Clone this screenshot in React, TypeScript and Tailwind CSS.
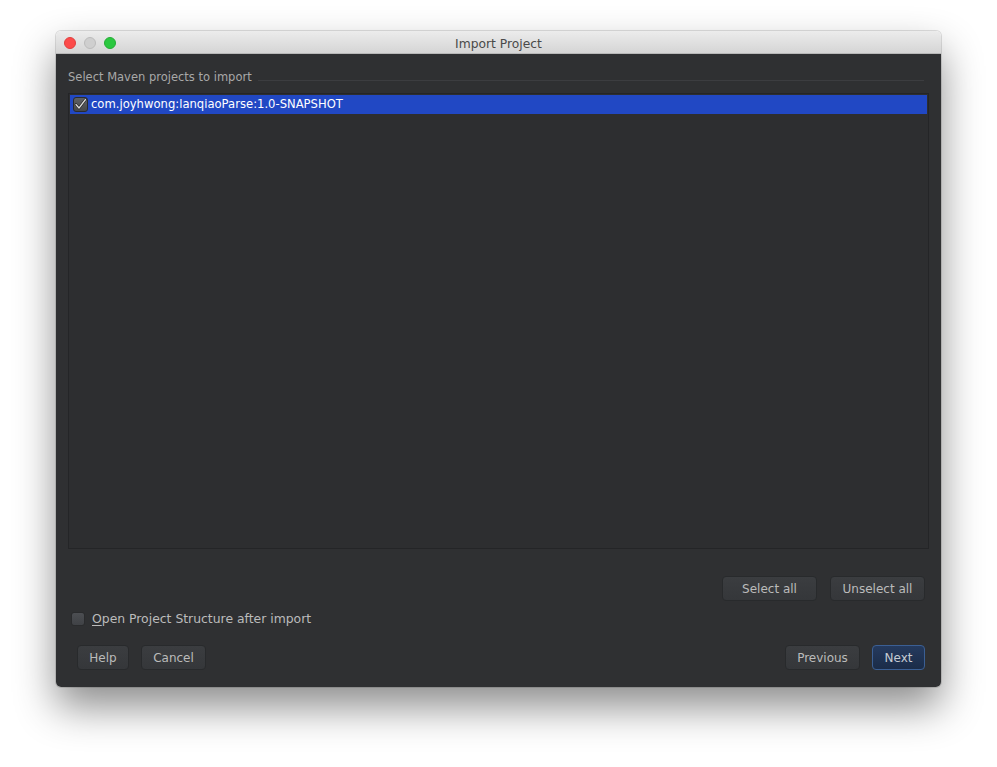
import React from "react";

const font = { fontFamily: '"DejaVu Sans", "Liberation Sans", sans-serif' };

function Btn({ children, w, primary }: { children: React.ReactNode; w: string; primary?: boolean }) {
  return (
    <div
      className={
        "h-[25px] flex items-center justify-center rounded-[4px] text-[12px] " +
        w +
        (primary
          ? " border border-[#3b5f94] bg-gradient-to-b from-[#253a5e] to-[#1b2c48] text-[#c5cbd3]"
          : " border border-[#282a2c] bg-gradient-to-b from-[#3b3d40] to-[#35373a] text-[#bbbbbb]")
      }
    >
      {children}
    </div>
  );
}

export default function App() {
  return (
    <div className="w-[997px] h-[767px] bg-white pt-[31px] pl-[56px]" style={font}>
      <div className="w-[885px] h-[656px] rounded-[5px] overflow-hidden flex flex-col shadow-[0_20px_40px_rgba(0,0,0,0.45),0_0_0_1px_rgba(0,0,0,0.12)]">
        {/* title bar */}
        <div className="h-[23px] relative flex items-center justify-center bg-gradient-to-b from-[#ececec] to-[#d5d5d5] border-b border-[#b8b8b8]">
          <div className="absolute left-[8px] top-[6px] flex gap-[8px]">
            <div className="w-[12px] h-[12px] rounded-full bg-[#fc4b4a] border border-[#e0403e]" />
            <div className="w-[12px] h-[12px] rounded-full bg-[#cfcfcf] border border-[#bcbcbc]" />
            <div className="w-[12px] h-[12px] rounded-full bg-[#2bc840] border border-[#24ad35]" />
          </div>
          <span className="text-[12.3px] text-[#4a4a4a] mt-[4px]">Import Project</span>
        </div>
        {/* content */}
        <div className="flex-1 bg-[#2f3032] flex flex-col px-[12px]">
          <div className="h-[39px] flex items-start pt-[16px]">
            <span className="text-[11.5px] leading-[14px] text-[#a8a8a8] whitespace-nowrap">Select Maven projects to import</span>
            <div className="flex-1 h-px bg-[#3c3d40] ml-[6px] mr-[5px] mt-[10px]" />
          </div>
          <div className="h-[456px] border border-[#242527] bg-[#2d2e30] p-[1px]">
            <div className="h-[19px] bg-[#2148c4] flex items-center pl-[3px]">
              <div className="w-[15px] h-[15px] rounded-[3px] bg-gradient-to-b from-[#5e6064] to-[#46484c] border border-[#2a2b2d] flex items-center justify-center">
                <svg width="13" height="13" viewBox="0 0 13 13">
                  <path d="M2 6.5 L5 10 L11.5 1.5" fill="none" stroke="#1e1e1e" strokeWidth="2.6" strokeLinecap="round" strokeLinejoin="round" />
                  <path d="M2 6.5 L5 10 L11.5 1.5" fill="none" stroke="#d8d8d8" strokeWidth="1.3" strokeLinecap="round" strokeLinejoin="round" />
                </svg>
              </div>
              <span className="ml-[3px] text-[11.6px] text-white whitespace-nowrap">com.joyhwong:lanqiaoParse:1.0-SNAPSHOT</span>
            </div>
          </div>
          <div className="flex justify-end gap-[13px] mt-[27px] mr-[4px]">
            <Btn w="w-[95px]">Select all</Btn>
            <Btn w="w-[95px]">Unselect all</Btn>
          </div>
          <div className="flex items-center mt-[11px] ml-[3px] h-[14px]">
            <div className="w-[14px] h-[14px] rounded-[3px] bg-gradient-to-b from-[#4c4e52] to-[#404246] border border-[#2a2b2d]" />
            <span className="ml-[7px] mt-[1px] text-[12.4px] text-[#bbbbbb] whitespace-nowrap">
              <span className="underline underline-offset-2">O</span>pen Project Structure after import
            </span>
          </div>
          <div className="flex items-center mt-[19px] px-[9px] pr-[4px]">
            <Btn w="w-[52px]">Help</Btn>
            <div className="ml-[12px]">
              <Btn w="w-[65px]">Cancel</Btn>
            </div>
            <div className="flex-1" />
            <Btn w="w-[75px]">Previous</Btn>
            <div className="ml-[12px]">
              <Btn w="w-[53px]" primary>Next</Btn>
            </div>
          </div>
        </div>
      </div>
    </div>
  );
}
